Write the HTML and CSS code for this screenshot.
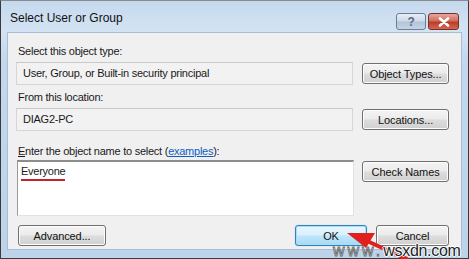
FILE: index.html
```html
<!DOCTYPE html>
<html>
<head>
<meta charset="utf-8">
<link rel="stylesheet" href="styles.css">
</head>
<body>
<div class="window">
  <div class="titlebar">
    <span class="title">Select User or Group</span>
    <div class="caption-buttons">
      <span class="cap help">?</span>
      <span class="cap close"><svg width="14" height="10" viewBox="0 0 14 10"><path d="M3 1.5 L11 8.5 M11 1.5 L3 8.5" stroke="#fff" stroke-width="2.6" stroke-linecap="round"/></svg></span>
    </div>
  </div>
  <div class="client">
    <div class="label">Select this object type:</div>
    <div class="row">
      <div class="field">User, Group, or Built-in security principal</div>
      <button class="btn">Object Types...</button>
    </div>
    <div class="label">From this location:</div>
    <div class="row">
      <div class="field">DIAG2-PC</div>
      <button class="btn">Locations...</button>
    </div>
    <div class="label label3"><u>E</u>nter the object name to select (<a class="link">examples</a>):</div>
    <div class="row top">
      <div class="textarea"><span class="entry">Everyone</span></div>
      <button class="btn">Check Names</button>
    </div>
    <div class="bottom">
      <button class="btn adv">Advanced...</button>
      <div class="spacer"></div>
      <button class="btn ok">OK</button>
      <button class="btn cancel">Cancel</button>
    </div>
  </div>
  <svg class="arrow" width="70" height="34" viewBox="0 0 70 34">
    <path d="M62 30 L22 12" stroke="#e0201c" stroke-width="4" stroke-linecap="round"/>
    <path d="M2 4 L30 4 L21 19 Z" fill="#e0201c"/>
  </svg>
  <div class="watermark"><span class="www">www.</span><span class="dom">wsxdn.com</span></div>
</div>
</body>
</html>
```
FILE: styles.css
```css
html, body { margin: 0; padding: 0; }
body {
  width: 469px;
  height: 259px;
  overflow: hidden;
  background: #fff;
  font-family: "Liberation Sans", Arial, sans-serif;
  font-size: 11px;
  letter-spacing: -0.25px;
  color: #1a1a1a;
}
.window {
  position: relative;
  box-sizing: border-box;
  width: 469px;
  height: 259px;
  border: 1px solid #3a3a3a;
  border-top-color: #8a8a8a;
  background: linear-gradient(to bottom, #c5d9ee 0px, #d3e3f3 30px, #c3d8ee 60px, #bcd3ea 100%);
  display: flex;
  flex-direction: column;
}
.titlebar {
  height: 31px;
  display: flex;
  align-items: center;
  padding: 0 9px 0 9px;
}
.title {
  font-size: 12px;
  letter-spacing: 0;
  color: #111;
  flex: 1;
  position: relative;
  top: 1px;
}
.caption-buttons {
  display: flex;
  gap: 2px;
  align-self: flex-start;
  margin-top: 12px;
}
.cap {
  height: 15px;
  border: 1px solid #6d7d92;
  border-radius: 3px;
  display: flex;
  align-items: center;
  justify-content: center;
  box-sizing: content-box;
}
.help {
  width: 28px;
  background: linear-gradient(to bottom, #e6edf5 0%, #cfdbe8 45%, #b3c4d8 55%, #c6d5e5 100%);
  color: #5a6a7d;
  font-size: 12px;
  font-weight: bold;
}
.close {
  width: 29px;
  border-color: #7a2d2d;
  background: linear-gradient(to bottom, #e4a79b 0%, #d0705f 45%, #be3b26 55%, #cf6a4f 100%);
}
.client {
  margin: 0 6px;
  height: 218px;
  box-sizing: border-box;
  background: #f0f0f0;
  border: 1px solid #a9bed6;
  padding: 11px 12px 0 8px;
  display: flex;
  flex-direction: column;
}
.label {
  height: 14px;
  line-height: 14px;
  padding-left: 2px;
  margin-bottom: 4px;
}
.label3 { margin-top: 8px; margin-bottom: 2px; }
.link { color: #0b5ec4; text-decoration: underline; }
.row {
  display: flex;
  align-items: center;
  gap: 9px;
  margin-bottom: 5px;
}
.row.top { align-items: flex-start; margin-bottom: 0; }
.field {
  box-sizing: border-box;
  width: 338px;
  height: 23px;
  line-height: 21px;
  padding-left: 6px;
  border: 1px solid #d6d6d6;
  border-top-color: #c8c8c8;
  background: #f2f2f2;
}
.textarea {
  box-sizing: border-box;
  width: 338px;
  height: 56px;
  margin-left: 1px;
  margin-right: -1px;
  border: 1px solid #dde3ea;
  border-top: 2px solid #8c8c8c;
  border-left: 1px solid #9a9a9a;
  background: #fff;
  padding: 2px 0 0 3px;
}
.entry {
  display: inline-block;
  line-height: 14px;
  border-bottom: 2px solid #c4232b;
  padding-bottom: 1px;
}
.btn {
  box-sizing: border-box;
  width: 87px;
  height: 21px;
  padding: 0;
  font-family: inherit;
  font-size: 11px;
  letter-spacing: -0.1px;
  color: #111;
  border: 1px solid #707070;
  border-radius: 3px;
  background: linear-gradient(to bottom, #f4f4f4 0%, #ebebeb 48%, #dddddd 52%, #d0d0d0 100%);
  box-shadow: inset 0 0 0 1px #fcfcfc;
}
.row.top .btn { margin-top: 1px; }
.bottom {
  display: flex;
  align-items: center;
  margin-top: 9px;
  padding-left: 2px;
}
.spacer { flex: 1; }
.adv { width: 88px; }
.ok {
  width: 72px;
  margin-right: 9px;
  border-color: #3c7fb1;
  background: linear-gradient(to bottom, #eaf6fd 0%, #d9f0fc 48%, #bee6fd 52%, #a7d9f5 100%);
  box-shadow: inset 0 0 0 1px #9fe0ff, 0 0 1px #5db2e8;
}
.cancel { width: 73px; }
.arrow {
  position: absolute;
  left: 344px;
  top: 228px;
}
.watermark {
  position: absolute;
  left: 332px;
  top: 242px;
  font-family: "Liberation Sans", Arial, sans-serif;
  font-size: 16px;
  letter-spacing: 0;
  line-height: 16px;
}
.www {
  color: #eeeeee;
  letter-spacing: 3px;
  -webkit-text-stroke: 0.8px #666;
}
.dom {
  color: #222;
  letter-spacing: -0.3px;
  text-shadow: 1px 0 0 #fff, -1px 0 0 #fff, 0 1px 0 #fff, 0 -1px 0 #fff;
}
```
